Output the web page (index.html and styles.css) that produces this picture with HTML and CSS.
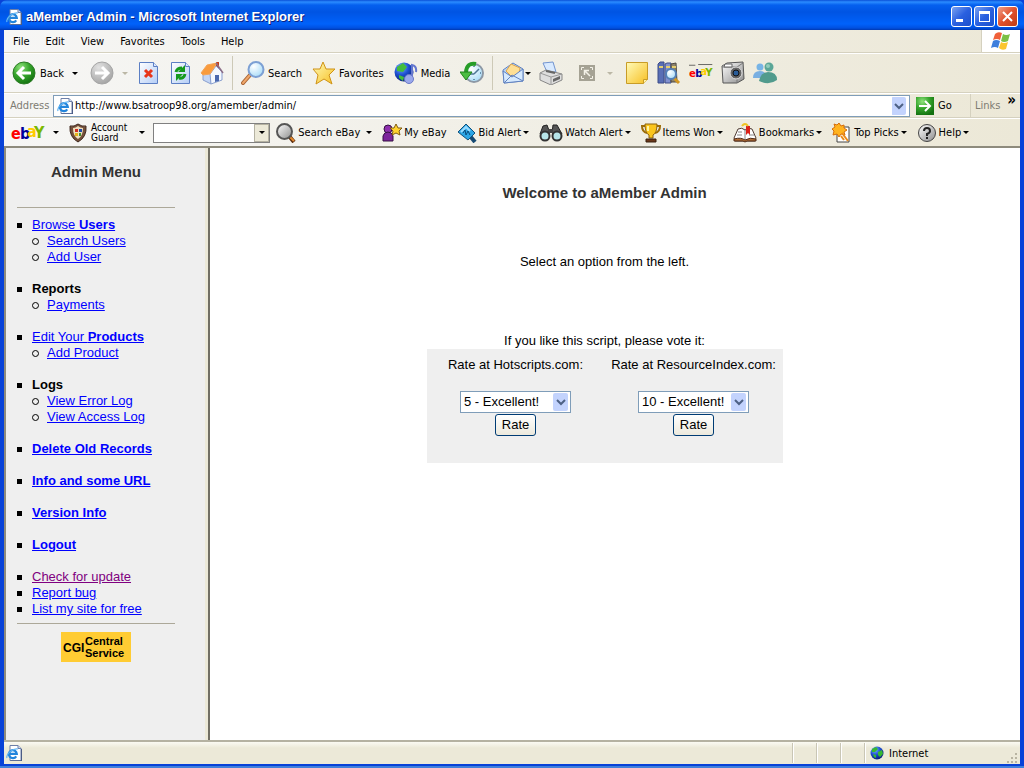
FILE: index.html
```html
<!DOCTYPE html>
<html lang="en">
<head>
  <meta charset="UTF-8">
  <meta name="viewport" content="width=device-width, initial-scale=1.0">
  <title>aMember Admin</title>
  <link rel="stylesheet" href="styles.css">
</head>
<body>
  <svg class="defs" aria-hidden="true">
    <defs>
      <radialGradient id="green" cx="35%" cy="25%" r="80%"><stop offset="0" stop-color="#8fe27c"/><stop offset=".5" stop-color="#36a52c"/><stop offset="1" stop-color="#12700f"/></radialGradient>
      <radialGradient id="grey" cx="35%" cy="25%" r="80%"><stop offset="0" stop-color="#e2e2e2"/><stop offset="1" stop-color="#a3a3a3"/></radialGradient>
      <radialGradient id="glass" cx="35%" cy="30%" r="75%"><stop offset="0" stop-color="#ffffff"/><stop offset="1" stop-color="#a8dcf8"/></radialGradient>
      <radialGradient id="globe" cx="35%" cy="25%" r="80%"><stop offset="0" stop-color="#7fb4ff"/><stop offset=".5" stop-color="#1d50d0"/><stop offset="1" stop-color="#071a70"/></radialGradient>
      <linearGradient id="paper" x1="0" y1="0" x2="1" y2="1"><stop offset="0" stop-color="#ffffff"/><stop offset="1" stop-color="#b4cdf6"/></linearGradient>
      <linearGradient id="gold" x1="0" y1="0" x2="1" y2="1"><stop offset="0" stop-color="#fffbb8"/><stop offset="1" stop-color="#f7bf22"/></linearGradient>
      <linearGradient id="metal" x1="0" y1="0" x2="1" y2="1"><stop offset="0" stop-color="#ffffff"/><stop offset="1" stop-color="#8d8d8d"/></linearGradient>
      <symbol id="page-icon" viewBox="0 0 16 16">
        <path d="M4 .5h8l3 3v12H4z" fill="#fff" stroke="#6d7fa8"/>
        <path d="M12 .5v3h3" fill="#cfdcf4" stroke="#6d7fa8"/>
        <path d="M15.5 4v12H4.500" fill="none" stroke="#4b5c85"/>
        <path d="M10.200 11.300A4 4 0 1 1 10.800 8.800H4" fill="none" stroke="#2385dc" stroke-width="2.200"/>
        <path d="M1 13C-.5 9 7 3 12 4" fill="none" stroke="#62b5f3" stroke-width="1.200"/>
      </symbol>
      <symbol id="globe-icon" viewBox="0 0 14 14">
        <circle cx="7" cy="7" r="6.500" fill="url(#globe)"/>
        <path d="M2 3l4-2 2 2-3 3-3 0zM8 6l4-2 1 4-3 3-2-2zM3 8l3 1 0 3-2-1z" fill="#37b832"/>
      </symbol>
      <symbol id="ebay-icon" viewBox="0 0 34 18">
        <text x="0" y="15" class="logo-letter" fill="#f00">e</text>
        <text x="9" y="15" class="logo-letter" fill="#00009c">b</text>
        <text x="16" y="13" class="logo-letter" fill="#fc0">a</text>
        <text x="23" y="14" class="logo-letter" fill="#7ab800">Y</text>
      </symbol>
    </defs>
  </svg>

  <header class="titlebar">
    <svg class="icon16"><use href="#page-icon"/></svg>
    <h1>aMember Admin - Microsoft Internet Explorer</h1>
    <button class="win-btn" aria-label="Minimize"><svg width="19" height="19"><path d="M4 12h7v3H4z" fill="#fff"/></svg></button>
    <button class="win-btn" aria-label="Maximize"><svg width="19" height="19"><path d="M4 4h11v11H4zM5 7v7h9V7z" fill="#fff" fill-rule="evenodd"/></svg></button>
    <button class="win-btn close" aria-label="Close"><svg width="19" height="19"><path d="M5 5l9 9M14 5l-9 9" stroke="#fff" stroke-width="2"/></svg></button>
  </header>

  <div class="window">
    <nav class="menubar">
      <button>File</button>
      <button>Edit</button>
      <button>View</button>
      <button>Favorites</button>
      <button>Tools</button>
      <button>Help</button>
      <div class="flag">
        <svg width="20" height="20" viewBox="0 0 20 20">
          <path d="M4 3q3-3 7-1L9 9q-3-2-7 0z" fill="#f0603a"/>
          <path d="M12 3q3 2 7 0l-2 7q-4 2-7 0z" fill="#7cc044"/>
          <path d="M2 10q3-2 7 0l-2 7q-3-2-7 0z" fill="#3f7fdc"/>
          <path d="M10 11q3 2 7 0l-2 7q-4 2-7-1z" fill="#fbc52e"/>
        </svg>
      </div>
    </nav>

    <div class="toolbar">
      <button class="tool back">
        <svg width="24" height="24"><circle cx="12" cy="12" r="11" fill="url(#green)" stroke="#2c7c25"/><path d="M19 12H7M12 6l-6 6 6 6" fill="none" stroke="#fff" stroke-width="3"/></svg>
        <span>Back</span>
        <i class="arrow"></i>
      </button>
      <button class="tool forward" aria-label="Forward">
        <svg width="24" height="24"><circle cx="12" cy="12" r="11" fill="url(#grey)" stroke="#a5a5a5"/><path d="M5 12h12M12 6l6 6-6 6" fill="none" stroke="#fff" stroke-width="3"/></svg>
        <i class="arrow off"></i>
      </button>
      <button class="tool" aria-label="Stop">
        <svg width="24" height="24"><path d="M3.500 1.500h14l4 4v17h-18z" fill="url(#paper)" stroke="#5c7fc4"/><path d="M17.500 1.500v4h4" fill="#dce8fc" stroke="#5c7fc4"/><path d="M9 9l7 7M16 9l-7 7" stroke="#e8361b" stroke-width="3"/></svg>
      </button>
      <button class="tool" aria-label="Refresh">
        <svg width="24" height="24"><path d="M3.500 1.500h14l4 4v17h-18z" fill="url(#paper)" stroke="#5c7fc4"/><path d="M17.500 1.500v4h4" fill="#dce8fc" stroke="#5c7fc4"/><path d="M8 11q1-4 6-4" fill="none" stroke="#149a1c" stroke-width="3"/><path d="M17 4v7h-7z" fill="#149a1c"/><path d="M17 13q-1 5-6 4" fill="none" stroke="#149a1c" stroke-width="3"/><path d="M8 20v-7h7z" fill="#149a1c"/></svg>
      </button>
      <button class="tool" aria-label="Home">
        <svg width="24" height="24"><path d="M16 1h3v6h-3z" fill="#c23b1c"/><path d="M3 11v8l8 4V10z" fill="#c3d5f4" stroke="#8aa0cf"/><path d="M11 23l11-4v-8l-6-6-6 8z" fill="#f4f8ff" stroke="#8aa0cf"/><path d="M15 21v-7h4v6z" fill="#4a68ae"/><path d="M1 12L7 4l10-2-7 11-7 1z" fill="#f99b3c" stroke="#f4a457"/><path d="M16 2l7 10" stroke="#8b6d87" stroke-width="1.500"/></svg>
      </button>
      <span class="sep"></span>
      <button class="tool label">
        <svg width="24" height="24"><path d="M9 14l-7 8" stroke="#a86334" stroke-width="4" stroke-linecap="round"/><path d="M9 14l-7 8" stroke="#efa76a" stroke-width="2" stroke-linecap="round"/><circle cx="15" cy="8.500" r="7.500" fill="url(#glass)" stroke="#7da0d4" stroke-width="2"/></svg>
        <span>Search</span>
      </button>
      <button class="tool label">
        <svg width="24" height="24"><path d="M11 1l3 7 9 0-6 6 3 9-8-5-8 5 2-9-5-6 7 0z" fill="url(#gold)" stroke="#cf9318"/></svg>
        <span>Favorites</span>
      </button>
      <button class="tool label">
        <svg width="24" height="24"><circle cx="10" cy="11" r="9.500" fill="url(#globe)"/><path d="M3 6l6-4 4 4-4 5-6-1zM5 14l5 2-1 4-4-3z" fill="#43bd3c"/><path d="M18 19V4q5 1 4 7" fill="none" stroke="#6477ce" stroke-width="2"/><ellipse cx="15" cy="18" rx="4.500" ry="4.500" fill="#9aa8ec" stroke="#6b7ac7"/></svg>
        <span>Media</span>
      </button>
      <button class="tool" aria-label="History">
        <svg width="24" height="24"><circle cx="14" cy="12" r="9" fill="url(#glass)" stroke="#8d98a5" stroke-width="2"/><path d="M14 13l5-5M10 13h4M14 5v1M14 18v1M20 12h1" stroke="#4d7595" stroke-width="1.500"/><path d="M16 3Q7 1 6 11" fill="none" stroke="#279d28" stroke-width="4"/><path d="M0 11h12l-6 8z" fill="#4bbd42" stroke="#1f841b"/></svg>
      </button>
      <span class="sep"></span>
      <button class="tool mail" aria-label="Mail">
        <svg width="24" height="24"><path d="M2 9l10-7 10 6v12L3 22z" fill="#b8d5fa" stroke="#6182c0"/><path d="M5 10l5-7 9 4-1 6-7 3z" fill="#ffdf94" stroke="#dea54c"/><path d="M2 10l9 6 11-8v12L3 22z" fill="#d5e9fe" stroke="#6182c0"/><path d="M3 22l8-8 11 6" fill="none" stroke="#6182c0"/></svg>
        <i class="arrow"></i>
      </button>
      <button class="tool" aria-label="Print">
        <svg width="24" height="24"><path d="M4 2l10-1 3 10H8z" fill="#d9eaff" stroke="#7294d0"/><path d="M1 12l6-3 16 4v6l-11 5L1 19z" fill="#dedede" stroke="#888"/><path d="M1 12l11 4 11-3M12 16v8" fill="none" stroke="#999"/><path d="M14 18l7-3v3l-7 3z" fill="#666"/><path d="M7 10l9 2" stroke="#666" stroke-width="2"/></svg>
      </button>
      <button class="tool edit" aria-label="Full screen">
        <svg width="24" height="24"><path d="M4 4h16v16H4z" fill="#a5a294"/><path d="M6.500 9V6.500H9M15 6.500h2.500V9M17.500 15v2.500H15M9 17.500H6.500V15" fill="none" stroke="#f4f2e8"/><path d="M15 15l-5-5M9.500 14V9.500H14" fill="none" stroke="#f4f2e8" stroke-width="1.500"/></svg>
        <i class="arrow off"></i>
      </button>
      <button class="tool" aria-label="Notes">
        <svg width="24" height="24"><path d="M1.500 1.500h21v17l-4 4h-17z" fill="url(#gold)" stroke="#c89c27"/><path d="M18.500 22.500v-4h4" fill="#fff2a9" stroke="#c89c27"/></svg>
      </button>
      <button class="tool" aria-label="Research">
        <svg width="24" height="24"><path d="M1 3l2-2h4v21H1z" fill="#596eb5" stroke="#3d4c88"/><path d="M8 3l2-1h4v20H8z" fill="#8291cf" stroke="#3d4c88"/><path d="M14 3l5-1 1 19h-6z" fill="#8d826d" stroke="#4e4a42"/><path d="M2 6h4M9 6h4M15 6h4" stroke="#e5ce6e" stroke-width="2"/><path d="M17 17l5 5" stroke="#d29722" stroke-width="3"/><circle cx="14" cy="13" r="5" fill="url(#glass)" stroke="#5380b8" stroke-width="2"/></svg>
      </button>
      <button class="tool" aria-label="eBay">
        <svg width="24" height="24" viewBox="0 0 34 34"><use href="#ebay-icon" y="7" width="34" height="18"/><path d="M0 6h9M13 5h20" stroke="#333" stroke-width="1"/></svg>
      </button>
      <button class="tool" aria-label="Camera">
        <svg width="24" height="24"><path d="M1 5l5-3 16-1 1 17-7 4-14 0z" fill="url(#metal)" stroke="#565656"/><path d="M1 6h15l6-4M16 6v16" fill="none" stroke="#777"/><path d="M4 3h7v3H3z" fill="#fff" stroke="#666"/><circle cx="15" cy="12" r="6" fill="#666" stroke="#ddd"/><circle cx="15" cy="12" r="3" fill="#285c99" stroke="#111"/></svg>
      </button>
      <button class="tool" aria-label="Messenger">
        <svg width="24" height="24"><circle cx="7" cy="6" r="3.500" fill="#77b4e6"/><path d="M0 17q0-7 7-7 6 0 7 7z" fill="#79afe1"/><circle cx="16" cy="6" r="4.500" fill="#5aa697"/><path d="M6 20q2-9 9-9 9 0 9 8-8 6-18 1z" fill="#519b8d"/><circle cx="15" cy="5" r="2" fill="#92ccbc"/></svg>
      </button>
    </div>

    <form class="addressbar">
      <label for="url">Address</label>
      <div class="address-field">
        <svg class="icon16"><use href="#page-icon"/></svg>
        <input type="text" id="url" value="http://www.bsatroop98.org/amember/admin/">
        <button type="button" class="drop" aria-label="Show addresses"></button>
      </div>
      <button type="button" class="go">
        <svg width="18" height="18"><path d="M0 0h18v18H0z" fill="url(#green)"/><path d="M3 9h11M9 4l5 5-5 5" fill="none" stroke="#fff" stroke-width="2"/></svg>
        <span>Go</span>
      </button>
      <button type="button" class="links">Links <b>»</b></button>
    </form>

    <div class="ebaybar">
      <button class="tool logo" aria-label="eBay">
        <svg width="34" height="18"><use href="#ebay-icon"/></svg>
        <i class="arrow"></i>
      </button>
      <button class="tool guard">
        <svg width="18" height="20"><path d="M1 3q4 1 8-2 4 3 8 2 1 11-8 16Q0 14 1 3z" fill="#74503a" stroke="#3c241a"/><path d="M4 5q3 0 5-2 2 2 5 2 0 8-5 11-5-3-5-11z" fill="#f0dfbd"/><path d="M6 6h3v3H6z" fill="#d12c20"/><path d="M10 6h3v3h-3z" fill="#224da8"/><path d="M6 10h3v3H6z" fill="#e5b419"/><path d="M10 10h2v3h-2z" fill="#42922e"/></svg>
        <span>Account<br>Guard</span>
        <i class="arrow"></i>
      </button>
      <div class="combo">
        <input type="text" aria-label="Search eBay">
        <button aria-label="Recent searches"><i class="arrow"></i></button>
      </div>
      <button class="tool search-ebay">
        <svg width="20" height="20"><path d="M13 13l5 6" stroke="#5b2c0d" stroke-width="4"/><path d="M14 14l4 4" stroke="#e68a2e" stroke-width="2"/><circle cx="8.500" cy="8.500" r="7.500" fill="url(#metal)" stroke="#555" stroke-width="2"/></svg>
        <span>Search eBay</span>
        <i class="arrow"></i>
      </button>
      <button class="tool my-ebay">
        <svg width="20" height="20"><circle cx="6" cy="6" r="4" fill="#8e2fae" stroke="#351142"/><path d="M1 18v-5q1-4 5-4t5 4v5z" fill="#7c249b" stroke="#351142"/><path d="M14 1l2 4h4l-3 3 1 4-4-2-4 2 1-4-3-3h4z" fill="#ffd22e" stroke="#805b10"/></svg>
        <span>My eBay</span>
      </button>
      <button class="tool">
        <svg width="20" height="20"><path d="M13 13l5 6" stroke="#174a73" stroke-width="4"/><path d="M1 9l8-8 9 9-7 7z" fill="#2ca5e5" stroke="#12517c"/><path d="M4 9l5-5 4 4" fill="none" stroke="#9bdcff" stroke-width="2"/><path d="M6 10l2-3 1 5 2-4 2 4" fill="none" stroke="#084b7b"/></svg>
        <span>Bid Alert</span>
        <i class="arrow"></i>
      </button>
      <button class="tool">
        <svg width="24" height="20"><path d="M4 3l4-1 3 8-6 3-4-2zM14 2l4 0 5 9-5 2-5-3z" fill="#555" stroke="#222"/><path d="M9 6h5v4H9z" fill="#444"/><circle cx="6" cy="13" r="4.500" fill="#b7e5e9" stroke="#333" stroke-width="2"/><circle cx="18" cy="13" r="4.500" fill="#b7e5e9" stroke="#333" stroke-width="2"/></svg>
        <span>Watch Alert</span>
        <i class="arrow"></i>
      </button>
      <button class="tool">
        <svg width="20" height="20"><path d="M4 3H1q0 6 5 7M16 3h3q0 6-5 7" fill="none" stroke="#9d6d08" stroke-width="2"/><path d="M4 1h12q0 9-4 11v3H8v-3Q4 10 4 1z" fill="#fac51c" stroke="#8d620d"/><path d="M7 3v5" stroke="#fff5a2" stroke-width="2"/><path d="M5 16h10v3H5z" fill="#6b3719" stroke="#38200f"/></svg>
        <span>Items Won</span>
        <i class="arrow"></i>
      </button>
      <button class="tool">
        <svg width="24" height="20"><path d="M1 15l4-9q4-2 7 1 4-3 7-1l4 9-1 3H2z" fill="#fff" stroke="#4e3a31"/><path d="M1 16q7-2 11 1 5-3 11-1v2l-9 0-2 1-2-1H1z" fill="#b46e34" stroke="#4e2b18"/><path d="M12 7v9M5 9h4M4 12h5M16 12h5" stroke="#888"/><path d="M13 3h4v9l-2-2-2 2z" fill="#db2118"/><path d="M9 3q3-4 6 0" fill="none" stroke="#efc323" stroke-width="2"/></svg>
        <span>Bookmarks</span>
        <i class="arrow"></i>
      </button>
      <button class="tool">
        <svg width="20" height="20"><path d="M5 4h12v15H5z" fill="#fff" stroke="#444"/><path d="M7 0l2 3 3-1 0 3 3 2-3 2 1 3-4-1-2 3-2-3-4 1 1-4-2-2 3-2-1-3 3 1z" fill="#ffb31f" stroke="#d66e0a"/><path d="M10 10l6 8M9 13l3 4" stroke="#eb8b19" stroke-width="2"/></svg>
        <span>Top Picks</span>
        <i class="arrow"></i>
      </button>
      <button class="tool">
        <svg width="20" height="20"><circle cx="10" cy="10" r="8.500" fill="url(#metal)" stroke="#444"/><path d="M7 8q0-3 3-3t3 3q0 2-3 3v2M10 14v2" fill="none" stroke="#222" stroke-width="2"/></svg>
        <span>Help</span>
        <i class="arrow"></i>
      </button>
    </div>

    <div class="content">
      <aside class="sidebar">
        <h2>Admin Menu</h2>
        <hr>
        <ul class="menu">
          <li><a href="#">Browse <b>Users</b></a>
            <ul>
              <li><a href="#">Search Users</a></li>
              <li><a href="#">Add User</a></li>
            </ul>
          </li>
          <li><b>Reports</b>
            <ul>
              <li><a href="#">Payments</a></li>
            </ul>
          </li>
          <li><a href="#">Edit Your <b>Products</b></a>
            <ul>
              <li><a href="#">Add Product</a></li>
            </ul>
          </li>
          <li><b>Logs</b>
            <ul>
              <li><a href="#">View Error Log</a></li>
              <li><a href="#">View Access Log</a></li>
            </ul>
          </li>
          <li><a href="#"><b>Delete Old Records</b></a></li>
          <li><a href="#"><b>Info and some URL</b></a></li>
          <li><a href="#"><b>Version Info</b></a></li>
          <li><a href="#"><b>Logout</b></a></li>
        </ul>
        <ul class="menu tight">
          <li><a href="#" class="seen">Check for update</a></li>
          <li><a href="#">Report bug</a></li>
          <li><a href="#">List my site for free</a></li>
        </ul>
        <hr>
        <a class="cgi" href="#">
          <svg width="70" height="30">
            <path d="M0 0h70v30H0z" fill="#fc3"/>
            <text x="2" y="20" class="cgi-big">CGI</text>
            <text x="24" y="13" class="cgi-small">Central</text>
            <text x="24" y="25" class="cgi-small">Service</text>
          </svg>
        </a>
      </aside>

      <main class="page">
        <h2>Welcome to aMember Admin</h2>
        <p class="hint">Select an option from the left.</p>
        <p>If you like this script, please vote it:</p>
        <div class="vote">
          <form>
            <label for="hotscripts">Rate at Hotscripts.com:</label>
            <select id="hotscripts"><option>5 - Excellent!</option></select>
            <button type="button">Rate</button>
          </form>
          <form>
            <label for="resourceindex">Rate at ResourceIndex.com:</label>
            <select id="resourceindex"><option>10 - Excellent!</option></select>
            <button type="button">Rate</button>
          </form>
        </div>
      </main>
    </div>

    <footer class="statusbar">
      <svg class="icon16"><use href="#page-icon"/></svg>
      <span class="pane first"></span>
      <span class="pane"></span>
      <span class="pane"></span>
      <span class="pane zone"><svg width="14" height="14"><use href="#globe-icon"/></svg>Internet</span>
      <svg class="grip" width="12" height="12"><path d="M9 1h2v2H9zM5 5h2v2H5zM9 5h2v2H9zM1 9h2v2H1zM5 9h2v2H5zM9 9h2v2H9z" fill="#b8b4a2"/></svg>
    </footer>
  </div>
</body>
</html>
```
FILE: styles.css
```css
* {
  box-sizing: border-box;
}
body {
  margin: 0;
  height: 100vh;
  display: flex;
  flex-direction: column;
  background-color: #0842d8;
  border-bottom: 2px solid #3f80dc;
  font-family: "DejaVu Sans Condensed", Tahoma, sans-serif;
  font-size: 11px;
  color: #000;
}
button, input, select {
  font: inherit;
  color: inherit;
}
button {
  padding: 0;
  border: none;
  background: none;
}
svg {
  display: block;
  flex: none;
}
.defs {
  position: absolute;
  width: 0;
  height: 0;
}
.icon16 {
  width: 16px;
  height: 16px;
}

/* title bar */
.titlebar {
  height: 30px;
  flex: none;
  display: flex;
  align-items: center;
  gap: 2px;
  padding: 3px 6px 0;
  border-radius: 7px 7px 0 0;
  background: linear-gradient(#0a50d8 0, #2b8cff 2px, #0560ef 5px, #0054e3 12px, #0062fb 24px, #0050e0 28px, #0038b0 30px);
}
h1 {
  flex: 1;
  margin: 0 0 0 2px;
  font-family: "Liberation Sans", Arial, sans-serif;
  font-size: 13px;
  color: #fff;
  text-shadow: 1px 1px #0a1f80;
}
.win-btn {
  width: 21px;
  height: 21px;
  border: 1px solid #fff;
  border-radius: 3px;
  background: linear-gradient(135deg, #7ba2f0, #2a60e0 50%, #1c4fcb);
}
.win-btn.close {
  background: linear-gradient(135deg, #f0a08a, #e0502c 50%, #c03c14);
}

/* menus and toolbars */
.window {
  flex: 1;
  min-height: 0;
  display: flex;
  flex-direction: column;
  margin: 0 4px 2px;
  background-color: #ece9d8;
}
.menubar, .toolbar, .addressbar, .ebaybar {
  flex: none;
  display: flex;
  align-items: center;
  background: linear-gradient(90deg, #f6f6f5, #ece8d7);
}
.menubar {
  height: 23px;
  padding-left: 1px;
  border-bottom: 1px solid #d5d1bf;
}
.menubar button {
  padding: 0 8px;
}
.flag {
  width: 39px;
  height: 22px;
  margin-left: auto;
  display: flex;
  align-items: center;
  justify-content: center;
  background-color: #fff;
  border-left: 1px solid #d5d1bf;
}
.toolbar {
  height: 40px;
  padding-left: 8px;
  gap: 8px;
  border-top: 1px solid #fff;
  border-bottom: 1px solid #d5d1bf;
}
.tool {
  display: flex;
  align-items: center;
  gap: 3px;
  white-space: nowrap;
}
.arrow {
  border: 3px solid transparent;
  border-top-color: #000;
  border-bottom: none;
}
.arrow.off {
  border-top-color: #bbb7a6;
}
.back, .forward, .edit {
  gap: 8px;
}
.back {
  margin-right: 4px;
}
.back span {
  margin-left: -4px;
}
.label {
  margin-right: 2px;
}
.mail {
  gap: 0;
}
.edit {
  margin: 0 4px;
}
.sep {
  width: 1px;
  height: 34px;
  background-color: #cdc9b7;
}
.addressbar {
  height: 25px;
  padding-left: 6px;
  border-top: 1px solid #fff;
  border-bottom: 1px solid #d5d1bf;
}
.addressbar label {
  width: 43px;
  color: #7d7b72;
}
.address-field {
  flex: 1;
  height: 22px;
  display: flex;
  align-items: center;
  padding-left: 3px;
  border: 1px solid #7f9db9;
  background-color: #fff;
}
.address-field input {
  flex: 1;
  border: none;
  padding: 0 2px;
  outline: none;
}
.drop {
  width: 16px;
  height: 18px;
  margin-right: 1px;
}
.drop, .vote select {
  background: url("data:image/svg+xml,%3Csvg xmlns='http://www.w3.org/2000/svg' width='16' height='18'%3E%3Crect width='15' height='18' rx='2' fill='%23c3d3fd'/%3E%3Cpath d='M4 7l4 4 4-4' fill='none' stroke='%234d6185' stroke-width='2'/%3E%3C/svg%3E") no-repeat right 1px center #fff;
}
.go {
  width: 60px;
  display: flex;
  align-items: center;
  gap: 4px;
  padding-left: 6px;
}
.links {
  width: 50px;
  height: 23px;
  display: flex;
  justify-content: space-between;
  padding: 5px 4px 0;
  border-left: 1px solid #d5d1bf;
  color: #7d7b72;
}
.links b {
  margin-top: -6px;
  font-size: 15px;
  line-height: 15px;
  color: #000;
}
.ebaybar {
  height: 30px;
  padding-left: 7px;
  gap: 10px;
  border-top: 1px solid #fff;
  border-bottom: 2px solid #8e8b7d;
}
.ebaybar .tool {
  gap: 2px;
}
.ebaybar .logo {
  gap: 8px;
}
.logo-letter {
  font-family: "DejaVu Sans Condensed", Tahoma, sans-serif;
  font-size: 16px;
  font-weight: bold;
}
.ebaybar .guard {
  gap: 4px;
  font-size: 10px;
  line-height: 10px;
  text-align: left;
}
.guard .arrow {
  margin-left: 8px;
}
.search-ebay .arrow {
  margin-left: 4px;
}
.combo {
  width: 117px;
  height: 20px;
  margin: 0 -4px 0 -2px;
  display: flex;
  border: 1px solid #808080;
  background-color: #fff;
}
.combo input {
  flex: 1;
  min-width: 0;
  border: none;
}
.combo button {
  width: 15px;
  display: flex;
  align-items: center;
  justify-content: center;
  background-color: #ece9d8;
  border: 1px solid #b5b2a2;
}

/* page frames */
.content {
  flex: 1;
  min-height: 0;
  display: flex;
  font-family: "Liberation Sans", Arial, sans-serif;
  font-size: 13px;
  line-height: 16px;
}
.content h2 {
  margin: 0;
  font-size: 15px;
  color: #333;
  text-align: center;
}
.sidebar {
  width: 206px;
  flex: none;
  padding: 16px 33px 0 11px;
  background-color: #efefef;
  border-left: 2px solid #8e8b7d;
  border-right: 2px solid #716f64;
  box-shadow: inset -3px 0 #ece9d8;
}
.sidebar hr {
  margin: 27px 0 9px;
  border: none;
  border-top: 1px solid #aca899;
}
ul {
  list-style: none;
  margin: 0;
  padding: 0;
}
.menu > li {
  margin-bottom: 16px;
}
.menu.tight > li {
  margin-bottom: 0;
}
.menu li {
  padding-left: 15px;
}
.menu li::before {
  content: "";
  display: inline-block;
  width: 5px;
  height: 5px;
  margin: 0 10px 1px -15px;
  background-color: #000;
}
.menu li li::before {
  width: 5px;
  height: 5px;
  margin: 0 8px 0 -15px;
  border: 1px solid #000;
  border-radius: 50%;
  background: none;
}
.menu a {
  color: #00f;
}
.menu a.seen {
  color: #800080;
}
.sidebar .tight + hr {
  margin: 6px 0 8px;
}
.cgi {
  display: flex;
  justify-content: center;
}
.cgi-big {
  font-size: 12px;
  font-weight: bold;
}
.cgi-small {
  font-size: 11px;
  font-weight: bold;
}
.page {
  flex: 1;
  display: flex;
  flex-direction: column;
  align-items: center;
  padding: 37px 21px 0 0;
  background-color: #fff;
}
.page p {
  margin: 0;
}
.page .hint {
  margin: 53px 0 63px;
}
.vote {
  display: grid;
  grid-template-columns: 178px 178px;
  padding: 8px 0 27px;
  background-color: #efefef;
}
.vote form {
  display: flex;
  flex-direction: column;
  align-items: center;
}
.vote select {
  width: 111px;
  height: 22px;
  margin: 18px 0 1px;
  padding: 0 3px;
  appearance: none;
  border: 1px solid #7f9db9;
}
.vote button {
  height: 22px;
  padding: 0 6px;
  border: 1px solid #003c74;
  border-radius: 3px;
  background: linear-gradient(#fff, #ece9dd);
}

/* status bar */
.statusbar {
  height: 24px;
  flex: none;
  display: flex;
  align-items: center;
  padding: 0 2px;
  border-top: 2px solid #b5b2a2;
  background: linear-gradient(#fbfaf3, #ece9d8 6px);
}
.pane {
  width: 24px;
  height: 20px;
  border-left: 1px solid #c9c6b5;
  box-shadow: inset 1px 0 #fff;
}
.pane.first {
  margin-left: auto;
}
.pane.zone {
  width: 142px;
  display: flex;
  align-items: center;
  gap: 5px;
  padding-left: 5px;
}
.grip {
  align-self: flex-end;
}
```
